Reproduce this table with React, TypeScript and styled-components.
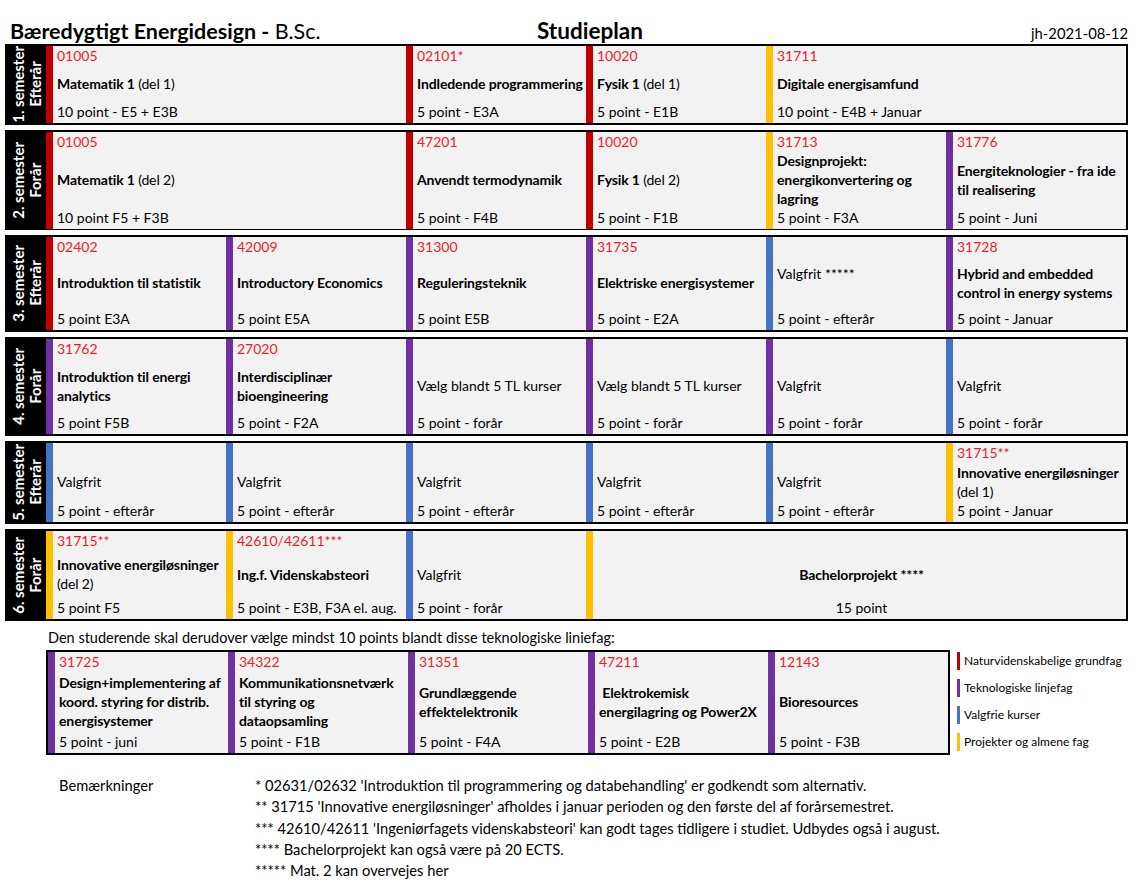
import React from 'react';
import styled, { createGlobalStyle } from 'styled-components';

const Global = createGlobalStyle`
  html, body { margin: 0; padding: 0; background: #fff; }
  body { font-family: Lato, "Liberation Sans", sans-serif; color: #000; }
`;

const COL = { red: '#c00000', purple: '#7030a0', blue: '#4472c4', yellow: '#ffc000' };
type Color = keyof typeof COL;

type CellData = {
  c: Color;
  span?: number;
  code?: string;
  name: React.ReactNode;
  bold?: boolean;
  pts: string;
  center?: boolean;
};

const Page = styled.div`
  width: 1138px;
  height: 891px;
  box-sizing: border-box;
  padding: 14px 0 0 5px;
`;

const Header = styled.div`
  display: grid;
  grid-template-columns: 532px 1fr auto;
  align-items: end;
  width: 1123px;
  height: 30px;
`;

const Title = styled.div`
  font-size: 21.5px;
  font-weight: 700;
  padding-left: 5px;
  line-height: 26px;
`;

const Thin = styled.span`
  font-weight: 400;
`;

const Center = styled.div`
  font-size: 22.5px;
  font-weight: 700;
  line-height: 26px;
`;

const DateText = styled.div`
  font-size: 14.8px;
  line-height: 22px;
`;

const Semester = styled.div<{ $h: number }>`
  display: flex;
  width: 1123px;
  height: ${(p) => p.$h}px;
  box-sizing: border-box;
  border: 2px solid #000;
  margin-bottom: 5px;
`;

const Label = styled.div`
  width: 39px;
  flex: none;
  background: #000;
  display: flex;
  align-items: center;
  justify-content: center;
`;

const LabelText = styled.div`
  writing-mode: vertical-rl;
  transform: rotate(180deg);
  text-align: center;
  color: #fff;
  font-weight: 700;
  font-size: 15px;
  line-height: 17px;
  white-space: nowrap;
`;

const Grid = styled.div<{ $cols: number }>`
  display: grid;
  grid-template-columns: repeat(${(p) => p.$cols}, 180px);
  flex: none;
`;

const Cell = styled.div<{ $c: Color; $span: number }>`
  grid-column: span ${(p) => p.$span};
  background: #f2f2f2;
  border-left: 7px solid ${(p) => COL[p.$c]};
  padding: 0 0 2px 4px;
  display: flex;
  flex-direction: column;
  font-size: 14px;
  min-width: 0;
`;

const Code = styled.div`
  color: #ee1c25;
  line-height: 19px;
  height: 19px;
`;

const Name = styled.div<{ $bold: boolean; $center: boolean }>`
  flex: 1;
  display: flex;
  flex-direction: column;
  justify-content: center;
  text-align: ${(p) => (p.$center ? 'center' : 'left')};
  font-weight: ${(p) => (p.$bold ? 700 : 400)};
  letter-spacing: ${(p) => (p.$bold ? '-0.12px' : '0')};
  line-height: 19px;
`;

const Points = styled.div<{ $center: boolean }>`
  line-height: 19px;
  text-align: ${(p) => (p.$center ? 'center' : 'left')};
`;

const Intro = styled.div`
  font-size: 14.5px;
  line-height: 18px;
  padding: 3px 0 0 43px;
  height: 21px;
`;

const ExtraRow = styled.div`
  display: flex;
  align-items: flex-start;
  padding-left: 41px;
`;

const ExtraBox = styled.div`
  display: flex;
  height: 105px;
  box-sizing: border-box;
  border: 2px solid #000;
`;

const Legend = styled.div`
  display: flex;
  flex-direction: column;
  gap: 9px;
  padding: 2px 0 0 7px;
`;

const LegendItem = styled.div`
  display: flex;
  align-items: center;
  gap: 4px;
  font-size: 12px;
  line-height: 18px;
`;

const Swatch = styled.span<{ $c: Color }>`
  width: 3px;
  height: 18px;
  background: ${(p) => COL[p.$c]};
`;

const Notes = styled.div`
  display: grid;
  grid-template-columns: 196px auto;
  padding: 20px 0 0 54px;
  font-size: 14.7px;
  line-height: 21.3px;
`;

const NoteList = styled.div`
  display: flex;
  flex-direction: column;
`;

const Del = ({ t, d }: { t: string; d: string }) => (
  <>
    {t} <Thin>{d}</Thin>
  </>
);

const rows: { label: [string, string]; h: number; cells: CellData[] }[] = [
  {
    label: ['1. semester', 'Efterår'],
    h: 81,
    cells: [
      { c: 'red', span: 2, code: '01005', name: <Del t="Matematik 1" d="(del 1)" />, bold: true, pts: '10 point - E5 + E3B' },
      { c: 'red', code: '02101*', name: 'Indledende programmering', bold: true, pts: '5 point - E3A' },
      { c: 'red', code: '10020', name: <Del t="Fysik 1" d="(del 1)" />, bold: true, pts: '5 point - E1B' },
      { c: 'yellow', span: 2, code: '31711', name: 'Digitale energisamfund', bold: true, pts: '10 point - E4B + Januar' },
    ],
  },
  {
    label: ['2. semester', 'Forår'],
    h: 100,
    cells: [
      { c: 'red', span: 2, code: '01005', name: <Del t="Matematik 1" d="(del 2)" />, bold: true, pts: '10 point F5 + F3B' },
      { c: 'red', code: '47201', name: 'Anvendt termodynamik', bold: true, pts: '5 point - F4B' },
      { c: 'red', code: '10020', name: <Del t="Fysik 1" d="(del 2)" />, bold: true, pts: '5 point - F1B' },
      { c: 'yellow', code: '31713', name: 'Designprojekt: energikonvertering og lagring', bold: true, pts: '5 point - F3A' },
      { c: 'purple', code: '31776', name: 'Energiteknologier - fra ide til realisering', bold: true, pts: '5 point - Juni' },
    ],
  },
  {
    label: ['3. semester', 'Efterår'],
    h: 97,
    cells: [
      { c: 'red', code: '02402', name: 'Introduktion til statistik', bold: true, pts: '5 point E3A' },
      { c: 'purple', code: '42009', name: 'Introductory Economics', bold: true, pts: '5 point E5A' },
      { c: 'purple', code: '31300', name: 'Reguleringsteknik', bold: true, pts: '5 point E5B' },
      { c: 'purple', code: '31735', name: 'Elektriske energisystemer', bold: true, pts: '5 point - E2A' },
      { c: 'blue', name: <>Valgfrit *****<br />&nbsp;</>, pts: '5 point - efterår' },
      { c: 'purple', code: '31728', name: 'Hybrid and embedded control in energy systems', bold: true, pts: '5 point - Januar' },
    ],
  },
  {
    label: ['4. semester', 'Forår'],
    h: 99,
    cells: [
      { c: 'purple', code: '31762', name: 'Introduktion til energi analytics', bold: true, pts: '5 point F5B' },
      { c: 'purple', code: '27020', name: 'Interdisciplinær bioengineering', bold: true, pts: '5 point - F2A' },
      { c: 'purple', name: 'Vælg blandt 5 TL kurser', pts: '5 point - forår' },
      { c: 'purple', name: 'Vælg blandt 5 TL kurser', pts: '5 point - forår' },
      { c: 'purple', name: 'Valgfrit', pts: '5 point - forår' },
      { c: 'blue', name: 'Valgfrit', pts: '5 point - forår' },
    ],
  },
  {
    label: ['5. semester', 'Efterår'],
    h: 83,
    cells: [
      { c: 'blue', name: 'Valgfrit', pts: '5 point - efterår' },
      { c: 'blue', name: 'Valgfrit', pts: '5 point - efterår' },
      { c: 'blue', name: 'Valgfrit', pts: '5 point - efterår' },
      { c: 'blue', name: 'Valgfrit', pts: '5 point - efterår' },
      { c: 'blue', name: 'Valgfrit', pts: '5 point - efterår' },
      { c: 'yellow', code: '31715**', name: <Del t="Innovative energiløsninger" d="(del 1)" />, bold: true, pts: '5 point - Januar' },
    ],
  },
  {
    label: ['6. semester', 'Forår'],
    h: 92,
    cells: [
      { c: 'yellow', code: '31715**', name: <Del t="Innovative energiløsninger" d="(del 2)" />, bold: true, pts: '5 point F5' },
      { c: 'yellow', code: '42610/42611***', name: 'Ing.f. Videnskabsteori', bold: true, pts: '5 point - E3B, F3A el. aug.' },
      { c: 'blue', name: 'Valgfrit', pts: '5 point - forår' },
      { c: 'yellow', span: 3, name: 'Bachelorprojekt ****', bold: true, pts: '15 point', center: true },
    ],
  },
];

const extra: CellData[] = [
  { c: 'purple', code: '31725', name: 'Design+implementering af koord. styring for distrib. energisystemer', bold: true, pts: '5 point - juni' },
  { c: 'purple', code: '34322', name: <>Kommunikationsnetværk<br />til styring og<br />dataopsamling</>, bold: true, pts: '5 point - F1B' },
  { c: 'purple', code: '31351', name: 'Grundlæggende effektelektronik', bold: true, pts: '5 point - F4A' },
  { c: 'purple', code: '47211', name: '\u00a0Elektrokemisk energilagring og Power2X', bold: true, pts: '5 point - E2B' },
  { c: 'purple', code: '12143', name: 'Bioresources', bold: true, pts: '5 point - F3B' },
];

const legend: { c: Color; t: string }[] = [
  { c: 'red', t: 'Naturvidenskabelige grundfag' },
  { c: 'purple', t: 'Teknologiske linjefag' },
  { c: 'blue', t: 'Valgfrie kurser' },
  { c: 'yellow', t: 'Projekter og almene fag' },
];

const notes = [
  "* 02631/02632 'Introduktion til programmering og databehandling' er godkendt som alternativ.",
  "** 31715 'Innovative energiløsninger' afholdes i januar perioden og den første del af forårsemestret.",
  "*** 42610/42611 'Ingeniørfagets videnskabsteori' kan godt tages tidligere i studiet. Udbydes også i august.",
  '**** Bachelorprojekt kan også være på 20 ECTS.',
  '***** Mat. 2 kan overvejes her',
];

const CourseCell = ({ d }: { d: CellData }) => (
  <Cell $c={d.c} $span={d.span ?? 1}>
    <Code>{d.code ?? ''}</Code>
    <Name $bold={!!d.bold} $center={!!d.center}>
      <div>{d.name}</div>
    </Name>
    <Points $center={!!d.center}>{d.pts}</Points>
  </Cell>
);

export default function App() {
  return (
    <>
      <Global />
      <Page>
        <Header>
          <Title>
            Bæredygtigt Energidesign - <Thin>B.Sc.</Thin>
          </Title>
          <Center>Studieplan</Center>
          <DateText>jh-2021-08-12</DateText>
        </Header>
        {rows.map((r, i) => (
          <Semester key={i} $h={r.h}>
            <Label>
              <LabelText>
                {r.label[0]}
                <br />
                {r.label[1]}
              </LabelText>
            </Label>
            <Grid $cols={6}>
              {r.cells.map((c, j) => (
                <CourseCell key={j} d={c} />
              ))}
            </Grid>
          </Semester>
        ))}
        <Intro>Den studerende skal derudover vælge mindst 10 points blandt disse teknologiske liniefag:</Intro>
        <ExtraRow>
          <ExtraBox>
            <Grid $cols={5}>
              {extra.map((c, j) => (
                <CourseCell key={j} d={c} />
              ))}
            </Grid>
          </ExtraBox>
          <Legend>
            {legend.map((l) => (
              <LegendItem key={l.t}>
                <Swatch $c={l.c} />
                {l.t}
              </LegendItem>
            ))}
          </Legend>
        </ExtraRow>
        <Notes>
          <div>Bemærkninger</div>
          <NoteList>
            {notes.map((n) => (
              <div key={n}>{n}</div>
            ))}
          </NoteList>
        </Notes>
      </Page>
    </>
  );
}
